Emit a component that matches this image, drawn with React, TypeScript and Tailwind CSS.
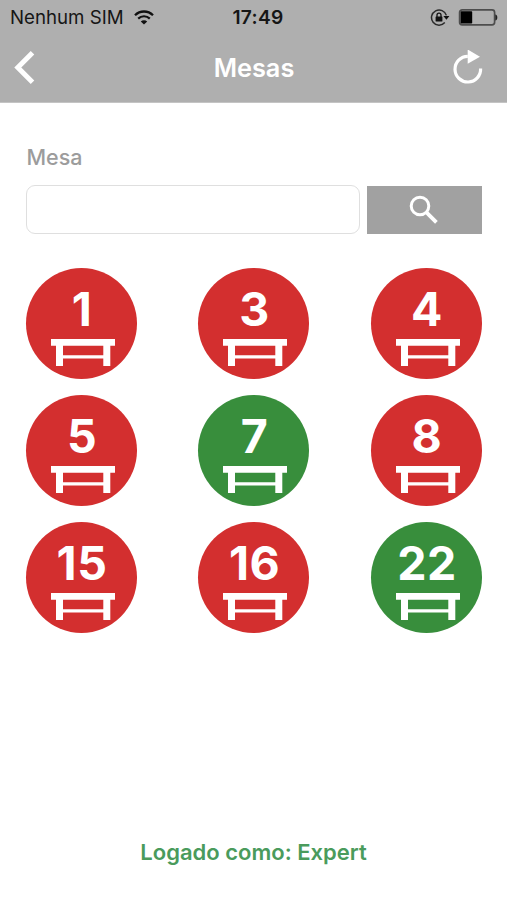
interface Table {
  number: number;
  free: boolean;
}

const tables: Table[] = [
  { number: 1, free: false },
  { number: 3, free: false },
  { number: 4, free: false },
  { number: 5, free: false },
  { number: 7, free: true },
  { number: 8, free: false },
  { number: 15, free: false },
  { number: 16, free: false },
  { number: 22, free: true },
];

function WifiIcon() {
  return (
    <svg width="20" height="15" viewBox="0 0 20 15" fill="none">
      <path d="M1 5.2a12.8 12.8 0 0 1 18 0" stroke="#111" strokeWidth="2.3" />
      <path d="M4.2 8.6a8.3 8.3 0 0 1 11.6 0" stroke="#111" strokeWidth="2.2" />
      <path d="M10 14.6 6.8 11.5a4.6 4.6 0 0 1 6.4 0z" fill="#111" />
    </svg>
  );
}

function RotationLockIcon() {
  return (
    <svg width="20" height="18" viewBox="0 0 20 18" fill="none">
      <path
        d="M16.4 6.4A7.6 7.6 0 1 0 14.8 13.6"
        stroke="#2b2b2b"
        strokeWidth="1.5"
      />
      <path d="M13.4 7h6L16.4 10.8z" fill="#111" />
      <rect x="5.6" y="7.6" width="6.8" height="5" rx="0.5" fill="#111" />
      <path d="M7 8V6.1a2 2 0 0 1 4 0V8" stroke="#111" strokeWidth="1.3" />
    </svg>
  );
}

function BatteryIcon() {
  return (
    <svg width="40" height="17" viewBox="0 0 40 17" fill="none">
      <rect
        x="1.6"
        y="0.9"
        width="35"
        height="15"
        rx="2.6"
        stroke="#4d4d4d"
        strokeWidth="1.7"
      />
      <rect x="2.6" y="2.3" width="11.6" height="12.2" rx="0.8" fill="#000" />
      <path d="M37.3 5.4c1.4.2 2 1.2 2 3s-.6 2.8-2 3z" fill="#222" />
    </svg>
  );
}

function TableIcon() {
  return (
    <svg width="64" height="27" viewBox="0 0 64 27" fill="#fff">
      <path
        d="M0 0h64v6.8h-4.7V27h-7v-7.5H12V27H5V6.8H0z M12 6.8v9.5h40.3V6.8z"
        fillRule="evenodd"
      />
    </svg>
  );
}

function TableButton({ table }: { table: Table }) {
  return (
    <button
      className={`flex size-[111px] flex-col items-center rounded-full pt-[17px] text-white ${
        table.free ? "bg-[#388e3c]" : "bg-[#d32f2f]"
      }`}
    >
      <span className="ml-0.5 h-12 text-[46.5px] leading-[48px] font-bold tracking-[0.5px]">
        {table.number}
      </span>
      <span className="mt-1.5 ml-[3px]">
        <TableIcon />
      </span>
    </button>
  );
}

export default function App() {
  return (
    <div className="flex h-[900px] w-[507px] flex-col bg-white font-['Inter',sans-serif]">
      <header className="h-[103px] border-b border-[#c4c4c4] bg-[#afafaf]">
        {/* Status bar */}
        <div className="grid h-[35px] grid-cols-[1fr_auto_1fr] items-center pr-[9px] pl-[10px] text-[#161616]">
          <div className="flex items-center gap-2.5 text-[18.7px] whitespace-nowrap">
            <span className="pt-px leading-7">Nenhum SIM</span>
            <WifiIcon />
          </div>
          <div className="ml-2 pb-px text-center text-[19.2px] leading-7 font-semibold tracking-[0.3px]">
            17:49
          </div>
          <div className="flex items-center justify-end gap-2">
            <RotationLockIcon />
            <BatteryIcon />
          </div>
        </div>

        {/* Navigation */}
        <div className="grid h-[66px] grid-cols-[1fr_auto_1fr] items-center pr-6 pl-[13px]">
          <button aria-label="Voltar" className="w-[30px]">
            <svg width="24" height="36" viewBox="0 0 24 36" fill="none">
              <path
                d="M19.5 2.7 4.8 17.5l14.7 14.7"
                stroke="#fff"
                strokeWidth="5"
              />
            </svg>
          </button>
          <h1 className="ml-3 text-[25.3px] leading-9 font-semibold text-white">
            Mesas
          </h1>
          <button aria-label="Atualizar" className="justify-self-end">
            <svg width="30" height="36" viewBox="0 0 30 36" fill="none">
              <path
                d="M27.6 18.5A12.8 12.8 0 1 1 14.8 6.4"
                stroke="#fff"
                strokeWidth="3.2"
              />
              <path d="M14.7-.5 27 6.7l-12.3 7z" fill="#fff" />
            </svg>
          </button>
        </div>
      </header>

      <main className="flex flex-1 flex-col px-[25.5px] pt-10">
        <label
          htmlFor="mesa"
          className="pl-px text-[21.5px] leading-7 font-medium text-[#9c9c9c]"
        >
          Mesa
        </label>
        <div className="mt-3.5 flex h-[49px] gap-[7px]">
          <input
            id="mesa"
            type="text"
            className="w-[334px] rounded-[9px] border-[1.5px] border-[#dfdfdf] bg-white px-3"
          />
          <button
            aria-label="Buscar"
            className="mt-px flex h-[48px] flex-1 items-center justify-center bg-[#a1a1a1]"
          >
            <svg
              width="30"
              height="30"
              viewBox="0 0 30 30"
              fill="none"
              stroke="#fff"
            >
              <circle cx="11" cy="11" r="8.8" strokeWidth="3" />
              <path d="m17.2 17.2 10.2 10.2" strokeWidth="3.8" />
            </svg>
          </button>
        </div>

        {/* Tables */}
        <div className="mt-[34px] grid grid-cols-[repeat(3,111px)] justify-between gap-y-4">
          {tables.map((table) => (
            <TableButton key={table.number} table={table} />
          ))}
        </div>

        <p className="mt-auto mb-8 text-center text-[22px] leading-8 font-semibold text-[#4a9b5c]">
          Logado como: Expert
        </p>
      </main>
    </div>
  );
}
